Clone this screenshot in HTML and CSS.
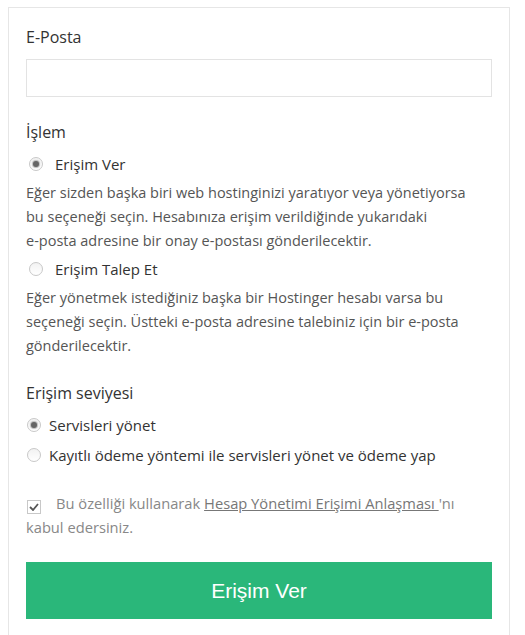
FILE: index.html
```html
<!DOCTYPE html>
<html lang="tr">
<head>
<meta charset="utf-8">
<link rel="stylesheet" href="styles.css">
</head>
<body>
<div class="card">
  <div class="field">
    <div class="label">E-Posta</div>
    <div class="input"></div>
  </div>

  <div class="section">
    <div class="label">İşlem</div>
    <div class="radio-row"><span class="radio checked"></span><span>Erişim Ver</span></div>
    <p class="desc">Eğer sizden başka biri web hostinginizi yaratıyor veya yönetiyorsa bu seçeneği seçin. Hesabınıza erişim verildiğinde yukarıdaki <span class="nw">e-posta</span> adresine bir onay <span class="nw">e-postası</span> gönderilecektir.</p>
    <div class="radio-row second"><span class="radio"></span><span>Erişim Talep Et</span></div>
    <p class="desc">Eğer yönetmek istediğiniz başka bir Hostinger hesabı varsa bu seçeneği seçin. Üstteki <span class="nw">e-posta</span> adresine talebiniz için bir <span class="nw">e-posta</span> gönderilecektir.</p>
  </div>

  <div class="section level">
    <div class="label">Erişim seviyesi</div>
    <div class="radio-row tight"><span class="radio checked"></span><span>Servisleri yönet</span></div>
    <div class="radio-row tight"><span class="radio"></span><span>Kayıtlı ödeme yöntemi ile servisleri yönet ve ödeme yap</span></div>
  </div>

  <p class="agree"><span class="check"><svg width="10" height="8" viewBox="0 0 10 8"><path d="M1 4 L4 7 L9 1" fill="none" stroke="#555" stroke-width="1.8"/></svg></span>Bu özelliği kullanarak <a href="#">Hesap Yönetimi Erişimi Anlaşması </a>'nı kabul edersiniz.</p>

  <button class="btn">Erişim Ver</button>
</div>
</body>
</html>
```
FILE: styles.css
```css
html, body { background: #fff; }
body {
  margin: 7px 0 0 8px;
  font-family: "Open Sans", "Noto Sans", sans-serif;
  color: #333;
  overflow: hidden;
  height: 628px;
}
.card {
  width: 466px;
  border: 1px solid #e6e6e6;
  border-bottom: none;
  padding: 17px 17px 20px 17px;
  height: 620px;
}
.label {
  font-size: 16px;
  line-height: 24px;
  color: #333;
}
.input {
  margin-top: 10px;
  height: 36px;
  border: 1px solid #e3e3e3;
}
.section { margin-top: 23px; }
.radio-row {
  display: flex;
  align-items: center;
  font-size: 15px;
  line-height: 24px;
  margin-top: 8px;
  color: #333;
}
.radio-row.second { margin-top: 4px; }
.radio {
  width: 14px;
  height: 14px;
  box-sizing: border-box;
  border: 1px solid #c8c8c8;
  border-radius: 50%;
  margin: 0 12px 0 3px;
  display: flex;
  align-items: center;
  justify-content: center;
  background: linear-gradient(#f2f2f2, #fff);
}
.radio.checked::after {
  content: "";
  width: 6px;
  height: 6px;
  border-radius: 50%;
  background: #666;
  box-shadow: 0 0 1px 1px #bbb;
}
.desc {
  margin: 5px 0 0 0;
  max-width: 452px;
  font-size: 14.5px;
  line-height: 24px;
  color: #555;
}
.nw { white-space: nowrap; }
.level .radio-row .radio { margin-right: 8px; margin-left: 1px; }
.radio-row.tight { margin-top: 8px; }
.radio-row.tight + .radio-row.tight { margin-top: 6px; }
.agree {
  margin: 24px 0 0 0;
  font-size: 14.7px;
  line-height: 24px;
  color: #888;
}
.agree a { color: #777; text-decoration: underline; }
.check {
  display: inline-flex;
  align-items: center;
  justify-content: center;
  width: 14px;
  height: 14px;
  box-sizing: border-box;
  border: 1px solid #c8c8c8;
  vertical-align: -2px;
  margin: 0 15px 0 1px;
  background: #fff;
}
.btn {
  display: block;
  width: 100%;
  margin-top: 23px;
  height: 57px;
  border: none;
  background: #2ab77a;
  color: #fff;
  font-family: "Liberation Sans", Arial, sans-serif;
  font-size: 21px;
}
```
